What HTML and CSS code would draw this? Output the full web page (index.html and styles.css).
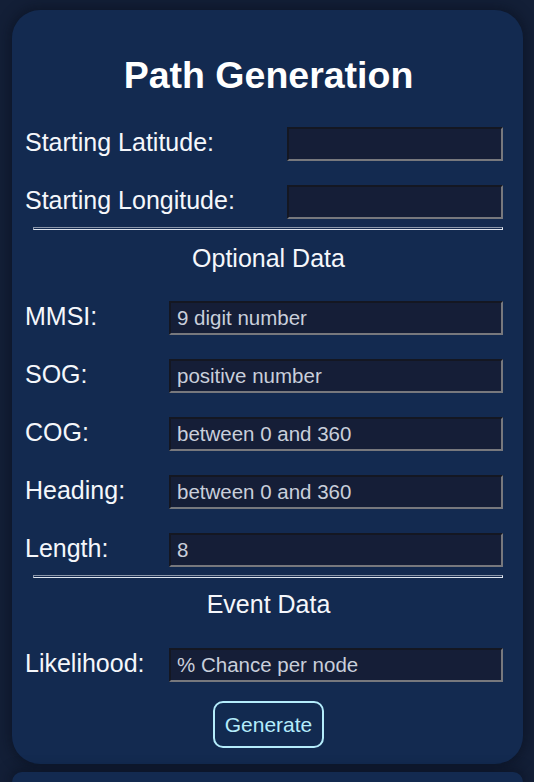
FILE: index.html
```html
<!DOCTYPE html>
<html lang="en">
<head>
<meta charset="utf-8">
<title>Path Generation</title>
<link rel="stylesheet" href="styles.css">
</head>
<body>
<main class="card">
  <h1 class="title">Path Generation</h1>
  <div class="rows rows-start">
    <div class="row"><label class="label" for="lat">Starting Latitude:</label><input class="field" id="lat" type="text"></div>
    <div class="row"><label class="label" for="lon">Starting Longitude:</label><input class="field" id="lon" type="text"></div>
  </div>
  <hr class="sep">
  <h2 class="section">Optional Data</h2>
  <div class="rows rows-opt">
    <div class="row"><label class="label" for="mmsi">MMSI:</label><input class="field" id="mmsi" type="text" placeholder="9 digit number"></div>
    <div class="row"><label class="label" for="sog">SOG:</label><input class="field" id="sog" type="text" placeholder="positive number"></div>
    <div class="row"><label class="label" for="cog">COG:</label><input class="field" id="cog" type="text" placeholder="between 0 and 360"></div>
    <div class="row"><label class="label" for="hdg">Heading:</label><input class="field" id="hdg" type="text" placeholder="between 0 and 360"></div>
    <div class="row"><label class="label" for="len">Length:</label><input class="field" id="len" type="text" value="8"></div>
  </div>
  <hr class="sep sep-2">
  <h2 class="section section-2">Event Data</h2>
  <div class="rows rows-opt rows-event">
    <div class="row"><label class="label" for="lik">Likelihood:</label><input class="field" id="lik" type="text" placeholder="% Chance per node"></div>
  </div>
  <div class="actions"><button class="btn" type="button">Generate</button></div>
</main>
<div class="card card-next"></div>
</body>
</html>
```

FILE: styles.css
```css
html, body {
  margin: 0;
  padding: 0;
}
body {
  background: #131f37;
  font-family: "Liberation Sans", Arial, sans-serif;
  color: #f5f7fb;
}
.card {
  box-sizing: border-box;
  margin: 10px 11px 0 12px;
  width: 511px;
  padding: 43px 11px 16px 13px;
  background: #132a50;
  border-radius: 28px;
  box-shadow: 0 0 12px 3px rgba(8, 14, 28, 0.5);
}
.card-next {
  margin-top: 8px;
  height: 10px;
  padding: 0;
  border-radius: 28px 28px 0 0;
}
.title {
  margin: 0;
  font-size: 37.5px;
  line-height: 44px;
  font-weight: bold;
  text-align: center;
  color: #ffffff;
}
.rows {
  display: flex;
  flex-direction: column;
  gap: 24px;
  margin-right: 9px;
}
.rows-start {
  margin-top: 30px;
}
.rows-opt {
  margin-top: 28px;
}
.rows-event {
  margin-top: 29px;
}
.row {
  display: grid;
  align-items: baseline;
}
.rows-start .row {
  grid-template-columns: 262px 216px;
}
.rows-opt .row {
  grid-template-columns: 144px 334px;
}
.label {
  font-size: 25px;
  line-height: 29px;
  color: #f5f7fb;
}
.field {
  box-sizing: border-box;
  height: 34px;
  width: 100%;
  margin: 0;
  padding: 0 6px;
  font-family: "Liberation Sans", Arial, sans-serif;
  font-size: 20.5px;
  color: #c9cfdb;
  background: #151e37;
  border-style: solid;
  border-width: 2px;
  border-color: #141722 #77787d #77787d #141722;
  outline: none;
}
.field::placeholder {
  color: #c9cfdb;
  opacity: 1;
}
.sep {
  box-sizing: content-box;
  height: 1px;
  margin: 8px 0 0 8px;
  width: 468px;
  border-style: solid;
  border-width: 1px;
  border-color: #8c97ab #dfe5ef #dfe5ef #8c97ab;
  background: #13294f;
}
.section {
  margin: 14px 0 0 0;
  font-size: 25px;
  line-height: 29px;
  font-weight: normal;
  text-align: center;
  color: #f5f7fb;
}
.section-2 {
  margin-top: 12px;
}
.actions {
  display: flex;
  justify-content: center;
  margin-top: 19px;
}
.btn {
  box-sizing: border-box;
  height: 47px;
  width: 111px;
  padding: 0;
  font-family: "Liberation Sans", Arial, sans-serif;
  font-size: 21px;
  color: #b4ecfb;
  background: #122a50;
  border: 2.5px solid #b4ecfb;
  border-radius: 10px;
}
```
